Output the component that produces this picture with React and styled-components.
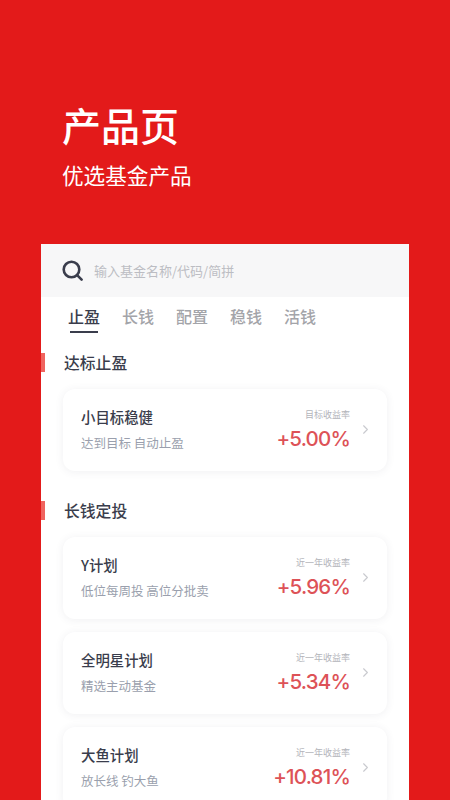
import styled, { createGlobalStyle } from "styled-components";
import { ChevronRight } from "lucide-react";

const GlobalStyle = createGlobalStyle`
    html, body {
        margin: 0;
        padding: 0;
        height: 800px;
        overflow: hidden;
        background: #e31a1a;
        font-family: "Noto Sans CJK SC", "Inter", "Liberation Sans", sans-serif;
    }
`;

const Container = styled.div`
    width: 450px;
    height: 800px;
    overflow: hidden;
    background-color: #e31a1a;
`;

const Hero = styled.div`
    height: 244px;
    box-sizing: border-box;
    padding: 96px 0 0 62px;
    color: #fff;
`;

const HeroTitle = styled.h1`
    margin: 0;
    font-size: 39px;
    line-height: 56px;
    font-weight: 500;
`;

const HeroSub = styled.div`
    margin-top: 8px;
    font-size: 21.6px;
    line-height: 30px;
    font-weight: 400;
`;

const Panel = styled.div`
    margin: 0 41px;
    height: 600px;
    background: #fff;
    position: relative;
`;

const SearchBar = styled.div`
    height: 53px;
    background: #f7f7f8;
    display: flex;
    align-items: center;
    padding-left: 21px;
`;

const SearchIcon = styled.svg`
    width: 21px;
    height: 21px;
    color: #3a3d4c;
`;

const Placeholder = styled.span`
    margin-left: 11px;
    font-size: 13px;
    color: #bcbdc3;
`;

const Tabs = styled.div`
    display: flex;
    align-items: flex-start;
    gap: 22px;
    padding: 7px 0 0 27px;
    height: 29px;
`;

const Tab = styled.div`
    position: relative;
    font-size: 16px;
    line-height: 24px;
    font-weight: 500;
    color: ${props => (props.$active ? "#3a3d4c" : "#a3a4a9")};

    &::after {
        content: "";
        display: ${props => (props.$active ? "block" : "none")};
        position: absolute;
        left: 2px;
        right: 2px;
        bottom: -5px;
        height: 2px;
        background: #3a3d4c;
    }
`;

const SectionTitle = styled.h2`
    position: relative;
    margin: ${props => props.$top}px 0 0;
    padding-left: 23px;
    font-size: 15.8px;
    line-height: 20px;
    font-weight: 500;
    color: #3a3d4c;

    &::before {
        content: "";
        position: absolute;
        left: 0;
        top: 0;
        width: 4px;
        height: 19px;
        background: #f0645f;
    }
`;

const CardList = styled.div`
    display: flex;
    flex-direction: column;
    gap: 13px;
    margin: 16px 22px 0;
`;

const Card = styled.div`
    height: 82px;
    box-sizing: border-box;
    border-radius: 12px;
    background: #fff;
    box-shadow: 0 1px 9px rgba(60, 60, 90, 0.08);
    display: flex;
    align-items: center;
    padding: 0 14px 0 18px;
`;

const CardInfo = styled.div`
    flex: 1;
    display: flex;
    flex-direction: column;
    gap: 7px;
    margin-top: -1px;
`;

const CardName = styled.span`
    font-size: 14.4px;
    line-height: 20px;
    font-weight: 500;
    color: #3a3d4c;
`;

const CardDesc = styled.span`
    font-size: 12.5px;
    line-height: 18px;
    color: #9a9fad;
`;

const CardRate = styled.div`
    display: flex;
    flex-direction: column;
    align-items: flex-end;
    margin-right: 8px;
`;

const RateLabel = styled.span`
    font-size: 9px;
    line-height: 14px;
    color: #b3b4ba;
`;

const RateValue = styled.span`
    margin-top: 4px;
    font-family: "Inter", "Liberation Sans", sans-serif;
    font-size: 20.5px;
    line-height: 26px;
    font-weight: 500;
    letter-spacing: -0.8px;
    color: #dd5257;
`;

const Arrow = styled(ChevronRight)`
    margin-top: -2px;
    color: #c9cacf;
`;

const targetProducts = [
    { name: "小目标稳健", desc: "达到目标 自动止盈", label: "目标收益率", rate: "+5.00%" },
];

const longProducts = [
    { name: "Y计划", desc: "低位每周投 高位分批卖", label: "近一年收益率", rate: "+5.96%" },
    { name: "全明星计划", desc: "精选主动基金", label: "近一年收益率", rate: "+5.34%" },
    { name: "大鱼计划", desc: "放长线 钓大鱼", label: "近一年收益率", rate: "+10.81%" },
];

const tabs = ["止盈", "长钱", "配置", "稳钱", "活钱"];

const ProductCard = ({ item }) => (
    <Card>
        <CardInfo>
            <CardName>{item.name}</CardName>
            <CardDesc>{item.desc}</CardDesc>
        </CardInfo>
        <CardRate>
            <RateLabel>{item.label}</RateLabel>
            <RateValue>{item.rate}</RateValue>
        </CardRate>
        <Arrow size={15} strokeWidth={1.8} />
    </Card>
);

const App = () => {
    return (
        <Container>
            <GlobalStyle />
            <Hero>
                <HeroTitle>产品页</HeroTitle>
                <HeroSub>优选基金产品</HeroSub>
            </Hero>
            <Panel>
                <SearchBar>
                    <SearchIcon viewBox="0 0 21 21" fill="none" stroke="currentColor">
                        <circle cx="9.5" cy="9.5" r="7.8" strokeWidth="2.6" />
                        <path d="M15.6 15.6 L19.6 19.6" strokeWidth="2.6" strokeLinecap="round" />
                    </SearchIcon>
                    <Placeholder>输入基金名称/代码/简拼</Placeholder>
                </SearchBar>
                <Tabs>
                    {tabs.map((tab, i) => (
                        <Tab key={tab} $active={i === 0}>{tab}</Tab>
                    ))}
                </Tabs>
                <SectionTitle $top={20}>达标止盈</SectionTitle>
                <CardList>
                    {targetProducts.map(item => <ProductCard key={item.name} item={item} />)}
                </CardList>
                <SectionTitle $top={30}>长钱定投</SectionTitle>
                <CardList>
                    {longProducts.map(item => <ProductCard key={item.name} item={item} />)}
                </CardList>
            </Panel>
        </Container>
    );
};

export default App;
